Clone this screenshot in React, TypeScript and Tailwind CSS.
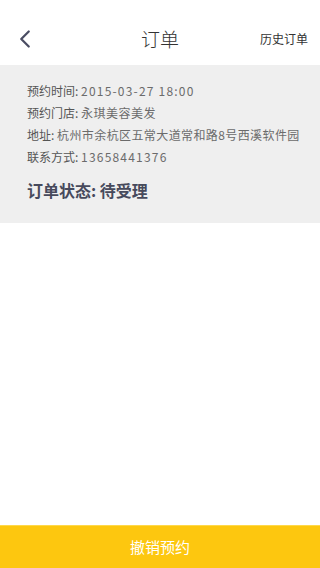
import { ChevronLeft } from 'lucide-react';

const font = { fontFamily: '"Noto Sans CJK SC", "Liberation Sans", sans-serif' };

export default function App() {
  const rows = [
    { label: '预约时间:', value: '2015-03-27 18:00', cls: 'tracking-[1.2px]' },
    { label: '预约门店:', value: '永琪美容美发', cls: 'tracking-[0.5px]' },
    { label: '地址:', value: '杭州市余杭区五常大道常和路8号西溪软件园', cls: 'tracking-[0.4px]' },
    { label: '联系方式:', value: '13658441376', cls: 'tracking-[1.2px]' },
  ];

  return (
    <div className="w-[320px] h-[568px] flex flex-col bg-white" style={font}>
      {/* Header */}
      <div className="h-[65px] flex items-end justify-between pb-[11px] px-[12px] relative">
        <ChevronLeft className="w-[30px] h-[30px] text-[#4a4d63] -ml-[2px]" strokeWidth={1.8} />
        <div className="absolute left-0 right-0 bottom-[11px] text-center text-[19px] leading-[30px] text-[#333] font-light pointer-events-none">
          订单
        </div>
        <div className="text-[12px] leading-[30px] text-[#333]">历史订单</div>
      </div>

      {/* Order info */}
      <div className="bg-[#efefef] h-[158px] px-[27px] pt-[15px]">
        {rows.map(r => (
          <div key={r.label} className="text-[12px] leading-[22px] text-[#555] whitespace-nowrap">
            {r.label} <span className={`text-[#6b6b6b] ${r.cls}`}>{r.value}</span>
          </div>
        ))}
        <div className="mt-[10px] text-[16px] font-bold text-[#474a5c] leading-[24px]">订单状态: 待受理</div>
      </div>

      <div className="flex-1" />

      {/* Cancel button */}
      <button className="h-[43px] bg-[#fdc70f] border-t border-[#ffd84a] text-white text-[15px]">
        撤销预约
      </button>
    </div>
  );
}
